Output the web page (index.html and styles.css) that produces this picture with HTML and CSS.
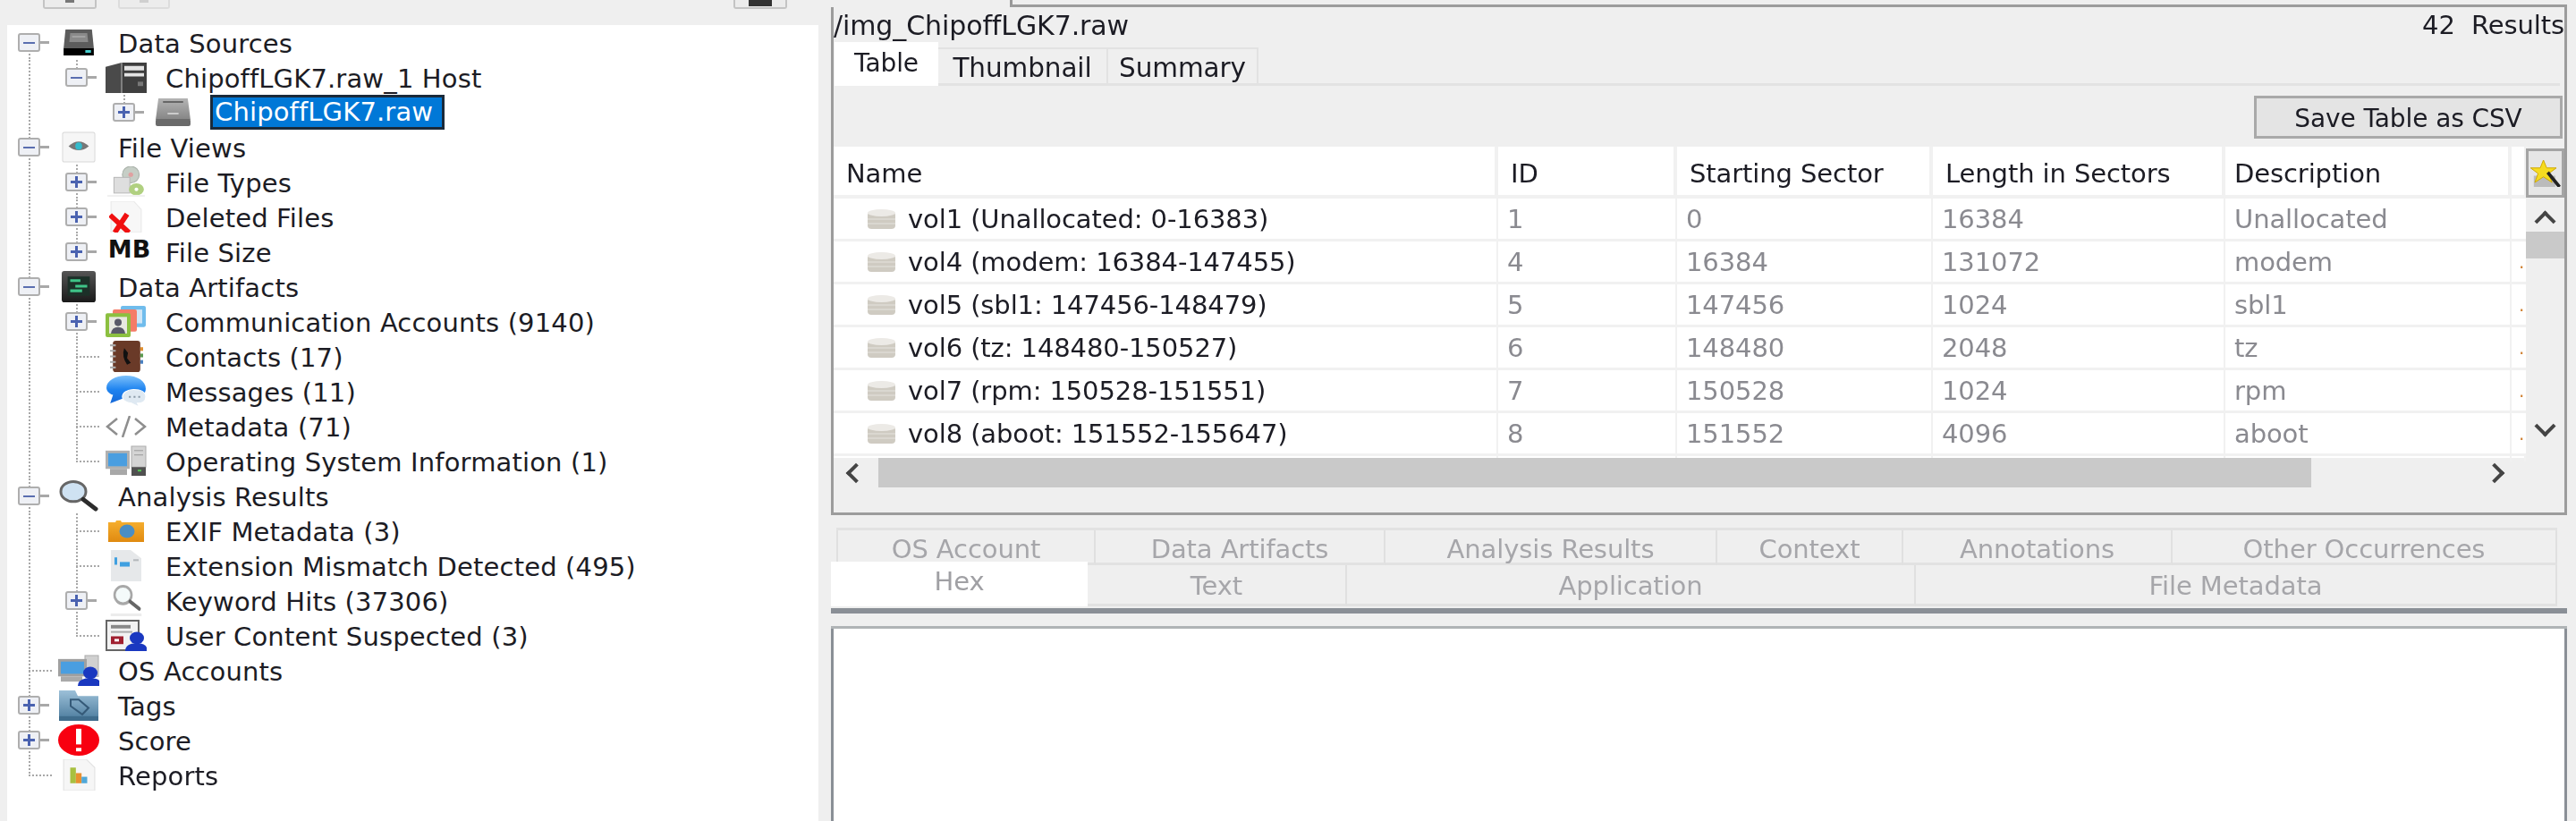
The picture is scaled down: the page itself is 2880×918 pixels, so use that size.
FILE: index.html
```html
<!DOCTYPE html>
<html lang="en">
<head>
<meta charset="utf-8">
<title>Autopsy</title>
<link rel="stylesheet" href="styles.css">
</head>
<body>
<svg class="defs" width="0" height="0" aria-hidden="true">
  <defs>
    <linearGradient id="g-disk" x1="0" y1="0" x2="0" y2="1"><stop offset="0" stop-color="#b4b4b4"/><stop offset="1" stop-color="#858585"/></linearGradient>
    <linearGradient id="g-art" x1="0" y1="0" x2="0" y2="1"><stop offset="0" stop-color="#555"/><stop offset="1" stop-color="#1a1a1a"/></linearGradient>
    <linearGradient id="g-exif" x1="0" y1="0" x2="0" y2="1"><stop offset="0" stop-color="#f6b030"/><stop offset="1" stop-color="#e08a10"/></linearGradient>
    <linearGradient id="g-tag" x1="0" y1="0" x2="0" y2="1"><stop offset="0" stop-color="#9cc0d8"/><stop offset="1" stop-color="#4a7a9c"/></linearGradient>
    <linearGradient id="g-msg" x1="0" y1="0" x2="0" y2="1"><stop offset="0" stop-color="#7cc0fa"/><stop offset=".5" stop-color="#1f84f0"/><stop offset="1" stop-color="#1668d8"/></linearGradient>
    <symbol id="i-drive" viewBox="0 0 36 30" preserveAspectRatio="none"><path d="M4 0h28l2 21H2z" fill="#5c5c5c"/><path d="M9 4h18l1 10H8z" fill="#8a8a8a"/><path d="M11 8h14" stroke="#bbb"/><rect x="2" y="21" width="32" height="8" fill="#000"/><rect x="25" y="23" width="6" height="3" fill="#4cc"/></symbol>
    <symbol id="i-host" viewBox="0 0 46 36" preserveAspectRatio="none"><path d="M0 6 18 1v35H0z" fill="#4a4a4a"/><path d="M18 1h28v35H18z" fill="#3f3f3f"/><path d="M21 5h22v5H21zM21 13h22v4H21z" fill="#e4e4e4"/><rect x="36" y="23" width="6" height="5" fill="#777"/><path d="M18 1v35" stroke="#999" stroke-width="1.400"/></symbol>
    <symbol id="i-disk" viewBox="0 0 40 33" preserveAspectRatio="none"><path d="M4 1h32l3 24H1z" fill="url(#g-disk)"/><path d="M9 5h22" stroke="#666" stroke-width="2"/><path d="M14 18h12" stroke="#ccc" stroke-width="2"/><rect x="1" y="24" width="38" height="8" rx="2" fill="#6a6a6a"/></symbol>
    <symbol id="i-eye" viewBox="0 0 40 34" preserveAspectRatio="none"><rect x="1" y="1" width="38" height="32" rx="2" fill="#f6f6f6" stroke="#d8d8d8"/><path d="M8 16q12-10 24 0-12 9-24 0z" fill="#777"/><circle cx="20" cy="16" r="4" fill="#3bc"/></symbol>
    <symbol id="i-types" viewBox="0 0 44 34" preserveAspectRatio="none"><ellipse cx="27" cy="9" rx="9" ry="9" fill="#c6cec6" stroke="#a8b0a8"/><circle cx="27" cy="9" r="2.500" fill="#e0a0a0"/><rect x="9" y="12" width="17" height="17" fill="#dedede" stroke="#b8b8b8"/><ellipse cx="33" cy="25" rx="8" ry="6.500" fill="#b0d080"/><circle cx="33" cy="25" r="2" fill="#fff"/><rect x="2" y="31" width="40" height="2" fill="#f0f0f0"/></symbol>
    <symbol id="i-deleted" viewBox="0 0 36 34" preserveAspectRatio="none"><path d="M2 0h24l8 9v25H2z" fill="#f7f7f7" stroke="#e8e8e8"/><path d="M1 15l20 19M19 14 6 34" stroke="#f01010" stroke-width="5.500"/></symbol>
    <symbol id="i-artifacts" viewBox="0 0 40 34" preserveAspectRatio="none"><rect width="40" height="34" rx="3" fill="url(#g-art)"/><rect x="7" y="6" width="26" height="21" fill="#1c3028"/><path d="M10 9h12v3H10zM16 15h14v3H16zM10 20h14v3H10z" fill="#3fc488"/></symbol>
    <symbol id="i-comm" viewBox="0 0 46 34" preserveAspectRatio="none"><rect x="17" y="0" width="28" height="23" rx="2" fill="#70bcec"/><rect x="32" y="4" width="9" height="15" fill="#cfe6f6"/><rect x="8" y="4" width="27" height="24" rx="2" fill="#f47c68"/><rect x="0" y="8" width="28" height="26" rx="2" fill="#8cc040"/><rect x="4" y="12" width="20" height="18" fill="#e8e8e0"/><circle cx="14" cy="18" r="4" fill="#5a5a68"/><path d="M6 30q1-7 8-7t8 7z" fill="#5a5a68"/></symbol>
    <symbol id="i-contacts" viewBox="0 0 36 34" preserveAspectRatio="none"><rect x="4" y="0" width="29" height="34" rx="3" fill="#6a3a28"/><path d="M1 5h6M1 11h6M1 17h6M1 23h6M1 29h6" stroke="#aaa" stroke-width="2"/><path d="M16 8q-3 9 3 18l4-2-4-5 1-6z" fill="#111"/><path d="M33 9h3" stroke="#e09030" stroke-width="4"/><path d="M33 16h3" stroke="#5a9a50" stroke-width="4"/><path d="M33 23h3" stroke="#4a80c0" stroke-width="4"/></symbol>
    <symbol id="i-msg" viewBox="0 0 44 34" preserveAspectRatio="none"><path d="M22 0c12 0 21 6 21 14 0 5-4 9-8 11H18l-13 5 3-9C3 19 1 16 1 13 1 6 10 0 22 0z" fill="url(#g-msg)"/><path d="M30 15c8 0 13 3 13 8s-4 7-9 7l2 4-8-4c-6-1-10-3-10-7s5-8 12-8z" fill="#dfe9f2" stroke="#fff"/><path d="M25 23h2M30 23h2M35 23h2" stroke="#8a9aa8" stroke-width="2"/></symbol>
    <symbol id="i-code" viewBox="0 0 46 24" preserveAspectRatio="none"><path d="M13 3 2 12l11 9M33 3l11 9-11 9M27 0 19 24" fill="none" stroke="#8e8e8e" stroke-width="2.500"/></symbol>
    <symbol id="i-osinfo" viewBox="0 0 46 36" preserveAspectRatio="none"><rect x="29" y="1" width="16" height="24" fill="#d4d4d4" stroke="#aaa"/><path d="M32 6h10M32 11h10" stroke="#999"/><rect x="0" y="6" width="27" height="21" fill="#b0b0b0"/><rect x="3" y="9" width="21" height="15" fill="#4a9ee0"/><rect x="5" y="27" width="19" height="7" fill="#a8a8a8"/><rect x="29" y="25" width="16" height="10" fill="#505050"/><rect x="36" y="28" width="4" height="2" fill="#5c5"/></symbol>
    <symbol id="i-search" viewBox="0 0 46 36" preserveAspectRatio="none"><ellipse cx="17" cy="13" rx="14" ry="11.500" fill="#cfe2f2" stroke="#666" stroke-width="3"/><path d="M28 22l14 11" stroke="#2c2c2c" stroke-width="5" stroke-linecap="round"/></symbol>
    <symbol id="i-exif" viewBox="0 0 40 24" preserveAspectRatio="none"><path d="M0 2h8l1-2h5l1 2h25v22H0z" fill="url(#g-exif)"/><ellipse cx="21" cy="12" rx="8.500" ry="7.500" fill="#4a8ec4"/></symbol>
    <symbol id="i-mismatch" viewBox="0 0 38 34" preserveAspectRatio="none"><path d="M2 0h22l12 9v25H2z" fill="#e6e8ea"/><rect x="6" y="8" width="3" height="8" fill="#40a0e0"/><rect x="12" y="13" width="11" height="5" fill="#40a0e0"/><path d="M27 11h6" stroke="#b4b8bc" stroke-width="2"/></symbol>
    <symbol id="i-keyword" viewBox="0 0 44 34" preserveAspectRatio="none"><ellipse cx="18" cy="11" rx="11" ry="9.500" fill="#f4fafa" stroke="#a8a8a8" stroke-width="3"/><path d="M27 18l12 8" stroke="#666" stroke-width="4" stroke-linecap="round"/><rect x="2" y="31" width="40" height="3" fill="#ececec"/></symbol>
    <symbol id="i-user" viewBox="0 0 46 36" preserveAspectRatio="none"><path d="M1 1h36v34H1z" fill="#f2f2f2" stroke="#666" stroke-width="2"/><path d="M6 6h22v4H6z" fill="#888"/><path d="M6 14h24" stroke="#aaa" stroke-width="2"/><rect x="6" y="19" width="14" height="9" fill="#a02030"/><rect x="10" y="22" width="5" height="3" fill="#fff"/><ellipse cx="35" cy="21" rx="8" ry="7" fill="#1a38c0"/><path d="M22 36q0-9 13-9t11 9z" fill="#1a38c0"/></symbol>
    <symbol id="i-osacct" viewBox="0 0 46 36" preserveAspectRatio="none"><rect x="30" y="1" width="15" height="24" fill="#d0d0d0" stroke="#aaa"/><rect x="0" y="5" width="32" height="20" fill="#a0a0a0"/><rect x="3" y="8" width="26" height="14" fill="#4a9ee0"/><rect x="3" y="25" width="24" height="6" fill="#aaa"/><ellipse cx="36" cy="21" rx="8" ry="7" fill="#1a38c0"/><path d="M22 36q0-9 14-9t10 9z" fill="#1a38c0"/></symbol>
    <symbol id="i-tags" viewBox="0 0 46 34" preserveAspectRatio="none"><path d="M1 7V1h18l3 6h23v27H1z" fill="url(#g-tag)"/><rect x="1" y="29" width="44" height="5" fill="#3f6c8c"/><path d="M14 11h9l11 9-7 7-13-9z" fill="none" stroke="#355a78" stroke-width="2"/></symbol>
    <symbol id="i-score" viewBox="0 0 46 36" preserveAspectRatio="none"><ellipse cx="23" cy="18" rx="23" ry="18" fill="#f80010"/><rect x="20" y="5" width="6" height="18" fill="#fff"/><rect x="20" y="27" width="6" height="4" fill="#fff"/></symbol>
    <symbol id="i-reports" viewBox="0 0 36 34" preserveAspectRatio="none"><path d="M2 0h24l9 9v25H2z" fill="#f6f6f6" stroke="#e2e2e2"/><rect x="9" y="9" width="6" height="17" fill="#a8c040"/><rect x="15" y="15" width="6" height="11" fill="#e89030"/><rect x="21" y="19" width="6" height="7" fill="#50a8d8"/></symbol>
    <symbol id="i-vol" viewBox="0 0 30 22" preserveAspectRatio="none"><rect x="0" y="3" width="30" height="19" rx="4" fill="#cfcbc2"/><ellipse cx="15" cy="4" rx="15" ry="4" fill="#eceae6"/><path d="M0 11h30M0 16h30" stroke="#e6e4de"/></symbol>
    <symbol id="i-star" viewBox="0 0 30 24" preserveAspectRatio="none"><path d="M4 14h20v10H4z" fill="#bbb"/><path d="M13 0l3 7h9l-7 5 3 8-8-5-8 5 3-8-7-5h9z" fill="#f6dc20" stroke="#d0a800" stroke-width=".8"/><path d="M17 11l11 13" stroke="#222" stroke-width="3"/></symbol>
  </defs>
</svg>

<div class="app">
  <aside class="side">
    <div class="toolbar">
      <span class="tool tool-a"><i class="tool-glyph"></i></span>
      <span class="tool tool-b"><i class="tool-glyph faint"></i></span>
      <span class="tool tool-c"><i class="tool-glyph dark"></i></span>
    </div>
    <div class="tree">
      <div class="row"><span class="c c-down"><i class="ex minus"></i></span><span class="ico"><svg class="s-drive"><use href="#i-drive"/></svg></span><span class="lbl">Data Sources</span></div>
      <div class="row"><span class="c c-v"></span><span class="c c-up"><i class="ex minus"></i></span><span class="ico"><svg><use href="#i-host"/></svg></span><span class="lbl">ChipoffLGK7.raw_1 Host</span></div>
      <div class="row"><span class="c c-v"></span><span class="c"></span><span class="c c-up"><i class="ex plus"></i></span><span class="ico"><svg class="s-disk"><use href="#i-disk"/></svg></span><span class="lbl sel">ChipoffLGK7.raw</span></div>

      <div class="row"><span class="c c-v"><i class="ex minus"></i></span><span class="ico"><svg class="s-narrow"><use href="#i-eye"/></svg></span><span class="lbl">File Views</span></div>
      <div class="row"><span class="c c-v"></span><span class="c c-v"><i class="ex plus"></i></span><span class="ico"><svg><use href="#i-types"/></svg></span><span class="lbl">File Types</span></div>
      <div class="row"><span class="c c-v"></span><span class="c c-v"><i class="ex plus"></i></span><span class="ico"><svg class="s-narrow"><use href="#i-deleted"/></svg></span><span class="lbl">Deleted Files</span></div>
      <div class="row"><span class="c c-v"></span><span class="c c-up"><i class="ex plus"></i></span><span class="ico"><b class="mb">MB</b></span><span class="lbl">File Size</span></div>

      <div class="row"><span class="c c-v"><i class="ex minus"></i></span><span class="ico"><svg class="s-narrow"><use href="#i-artifacts"/></svg></span><span class="lbl">Data Artifacts</span></div>
      <div class="row"><span class="c c-v"></span><span class="c c-v"><i class="ex plus"></i></span><span class="ico"><svg><use href="#i-comm"/></svg></span><span class="lbl">Communication Accounts (9140)</span></div>
      <div class="row"><span class="c c-v"></span><span class="c c-t"></span><span class="ico"><svg class="s-narrow"><use href="#i-contacts"/></svg></span><span class="lbl">Contacts (17)</span></div>
      <div class="row"><span class="c c-v"></span><span class="c c-t"></span><span class="ico"><svg><use href="#i-msg"/></svg></span><span class="lbl">Messages (11)</span></div>
      <div class="row"><span class="c c-v"></span><span class="c c-t"></span><span class="ico"><svg class="s-short"><use href="#i-code"/></svg></span><span class="lbl">Metadata (71)</span></div>
      <div class="row"><span class="c c-v"></span><span class="c c-l"></span><span class="ico"><svg><use href="#i-osinfo"/></svg></span><span class="lbl">Operating System Information (1)</span></div>

      <div class="row"><span class="c c-v"><i class="ex minus"></i></span><span class="ico"><svg><use href="#i-search"/></svg></span><span class="lbl">Analysis Results</span></div>
      <div class="row"><span class="c c-v"></span><span class="c c-t"></span><span class="ico"><svg class="s-exif"><use href="#i-exif"/></svg></span><span class="lbl">EXIF Metadata (3)</span></div>
      <div class="row"><span class="c c-v"></span><span class="c c-t"></span><span class="ico"><svg class="s-narrow"><use href="#i-mismatch"/></svg></span><span class="lbl">Extension Mismatch Detected (495)</span></div>
      <div class="row"><span class="c c-v"></span><span class="c c-v"><i class="ex plus"></i></span><span class="ico"><svg class="s-narrow"><use href="#i-keyword"/></svg></span><span class="lbl">Keyword Hits (37306)</span></div>
      <div class="row"><span class="c c-v"></span><span class="c c-l"></span><span class="ico"><svg><use href="#i-user"/></svg></span><span class="lbl">User Content Suspected (3)</span></div>

      <div class="row"><span class="c c-t"></span><span class="ico"><svg><use href="#i-osacct"/></svg></span><span class="lbl">OS Accounts</span></div>
      <div class="row"><span class="c c-v"><i class="ex plus"></i></span><span class="ico"><svg><use href="#i-tags"/></svg></span><span class="lbl">Tags</span></div>
      <div class="row"><span class="c c-v"><i class="ex plus"></i></span><span class="ico"><svg><use href="#i-score"/></svg></span><span class="lbl">Score</span></div>
      <div class="row"><span class="c c-l"></span><span class="ico"><svg class="s-narrow"><use href="#i-reports"/></svg></span><span class="lbl">Reports</span></div>
    </div>
  </aside>

  <main class="main">
    <div class="tabstub"></div>
    <section class="results">
      <div class="path"><span class="path-text">/img_ChipoffLGK7.raw</span><span class="count">42&nbsp;&nbsp;Results</span></div>
      <div class="tabs">
        <span class="tab on">Table</span>
        <span class="tab thumb">Thumbnail</span>
        <span class="tab summ">Summary</span>
      </div>
      <div class="actions"><span class="csv">Save Table as CSV</span></div>
      <div class="grid-wrap">
        <div class="grid">
          <div class="gr head">
            <span>Name</span><span>ID</span><span>Starting Sector</span><span>Length in Sectors</span><span>Description</span><span></span>
          </div>
          <div class="gr"><span class="nm"><svg class="vol"><use href="#i-vol"/></svg>vol1 (Unallocated: 0-16383)</span><span>1</span><span>0</span><span>16384</span><span>Unallocated</span><span class="tail"></span></div>
          <div class="gr"><span class="nm"><svg class="vol"><use href="#i-vol"/></svg>vol4 (modem: 16384-147455)</span><span>4</span><span>16384</span><span>131072</span><span>modem</span><span class="tail">.</span></div>
          <div class="gr"><span class="nm"><svg class="vol"><use href="#i-vol"/></svg>vol5 (sbl1: 147456-148479)</span><span>5</span><span>147456</span><span>1024</span><span>sbl1</span><span class="tail">.</span></div>
          <div class="gr"><span class="nm"><svg class="vol"><use href="#i-vol"/></svg>vol6 (tz: 148480-150527)</span><span>6</span><span>148480</span><span>2048</span><span>tz</span><span class="tail">.</span></div>
          <div class="gr"><span class="nm"><svg class="vol"><use href="#i-vol"/></svg>vol7 (rpm: 150528-151551)</span><span>7</span><span>150528</span><span>1024</span><span>rpm</span><span class="tail">.</span></div>
          <div class="gr"><span class="nm"><svg class="vol"><use href="#i-vol"/></svg>vol8 (aboot: 151552-155647)</span><span>8</span><span>151552</span><span>4096</span><span>aboot</span><span class="tail">.</span></div>
          <div class="gr stub"><span></span><span></span><span></span><span></span><span></span><span></span></div>
        </div>
        <div class="vscroll">
          <span class="corner"><svg><use href="#i-star"/></svg></span>
          <span class="arrow up"></span>
          <span class="vthumb"></span>
          <span class="arrow down"></span>
        </div>
      </div>
      <div class="hscroll">
        <span class="harrow left"></span>
        <span class="hthumb"></span>
        <span class="harrow right"></span>
      </div>
    </section>

    <div class="lower-tabs">
      <div class="ltrow upper">
        <span class="lt w1">OS Account</span><span class="lt w2">Data Artifacts</span><span class="lt w3">Analysis Results</span><span class="lt w4">Context</span><span class="lt w5">Annotations</span><span class="lt w6">Other Occurrences</span>
      </div>
      <div class="ltrow lower">
        <span class="lt on x1">Hex</span><span class="lt x2">Text</span><span class="lt x3">Application</span><span class="lt x4">File Metadata</span>
      </div>
    </div>
    <section class="viewer">
      <div class="viewer-band"></div>
      <div class="viewer-body"></div>
    </section>
  </main>
</div>
</body>
</html>
```
FILE: styles.css
```css
* { box-sizing: border-box; }
html, body { margin: 0; padding: 0; height: 100%; overflow: hidden; }
body {
  background: #efefef;
  color: #1c1c24;
  font-family: "DejaVu Sans", sans-serif;
  font-size: 29px;
  letter-spacing: -0.1px;
}
.defs { display: block; height: 0; }
.app { display: flex; height: 918px; filter: blur(0.7px); }

/* left */
.side { width: 929px; flex: none; display: flex; flex-direction: column; padding-left: 8px; }
.toolbar { height: 28px; display: flex; align-items: flex-start; }
.tool { height: 10px; border: 2px solid #c4c4c4; border-top: 0; border-radius: 0 0 3px 3px; background: #ececec; display: flex; justify-content: center; }
.tool-a { width: 60px; margin-left: 40px; }
.tool-b { width: 58px; margin-left: 24px; border-color: #dcdcdc; }
.tool-c { width: 60px; margin-left: 630px; }
.tool-glyph { width: 10px; height: 3px; background: #777; }
.tool-glyph.faint { background: #cfcfcf; }
.tool-glyph.dark { width: 26px; height: 7px; background: #333; }
.tree { width: 907px; height: 890px; background: #fff; }
.row { display: flex; height: 39px; align-items: center; }
.c {
  width: 53px; height: 39px; flex: none; display: flex; align-items: center;
  --dots: repeating-linear-gradient(to bottom, #a8a8a8 0 2px, transparent 2px 4px);
  --dash: repeating-linear-gradient(to right, #a8a8a8 0 2px, transparent 2px 4px);
  background-repeat: no-repeat;
}
.c-v { background-image: var(--dots); background-size: 2px 100%; background-position: 24px 0; }
.c-up { background-image: var(--dots); background-size: 2px 50%; background-position: 24px 0; }
.c-down { background-image: var(--dots); background-size: 2px 50%; background-position: 24px 100%; }
.c-t { background-image: var(--dots), var(--dash); background-size: 2px 100%, 28px 2px; background-position: 24px 0, 24px 19px; }
.c-l { background-image: var(--dots), var(--dash); background-size: 2px 20px, 28px 2px; background-position: 24px 0, 24px 19px; }
.ex {
  display: block; width: 25px; height: 21px; margin-left: 12px;
  border: 2px solid #aeaeae; border-radius: 3px; background-color: #eef0f5;
  background-repeat: no-repeat; box-shadow: 12px 0 0 -9px #a8a8a8, 19px 0 0 -9px #a8a8a8;
}
.minus { background-image: linear-gradient(#5a6eb0, #5a6eb0); background-size: 13px 2px; background-position: center; }
.plus { background-image: linear-gradient(#4a62b0, #4a62b0), linear-gradient(#4a62b0, #4a62b0); background-size: 13px 3px, 3px 13px; background-position: center; }
.ico { width: 53px; height: 39px; flex: none; display: flex; align-items: center; justify-content: center; }
.ico svg { width: 46px; height: 35px; display: block; }
.ico svg.s-narrow { width: 38px; }
.ico svg.s-drive { width: 38px; height: 30px; }
.ico svg.s-disk { width: 41px; height: 33px; }
.ico svg.s-short { height: 24px; }
.ico svg.s-exif { width: 40px; height: 24px; }
.mb { font-size: 27px; font-weight: 700; color: #111; letter-spacing: 0; margin: -6px 0 0 8px; line-height: 1; }
.lbl { margin-left: 18px; white-space: nowrap; line-height: 34px; margin-top: 2px; letter-spacing: 0.15px; }
.sel { background: #0078d7; color: #fff; border: 3px solid #1a2a3a; padding: 0 4px 0 2px; margin: 0 0 0 15px; height: 39px; width: 262px; line-height: 33px; }

/* right */
.main { width: 1941px; flex: none; display: flex; flex-direction: column; }
.tabstub { height: 8px; margin-left: 200px; border-left: 3px solid #999; border-bottom: 3px solid #9c9c9c; }
.results { height: 568px; border: 3px solid #9c9c9c; border-top: 0; display: flex; flex-direction: column; }
.path { height: 40px; display: flex; justify-content: space-between; align-items: center; }
.path-text { font-size: 30px; }
.count { white-space: nowrap; }
.tabs { display: flex; height: 48px; margin-left: 1px; margin-right: 5px; border-bottom: 3px solid #e2e2e2; align-items: flex-end; font-size: 29.500px; }
.tab { display: flex; align-items: center; justify-content: center; height: 41px; margin-bottom: -1px; border: 2px solid #e2e2e2; border-bottom: 0; border-left: 0; padding-top: 3px; }
.tab.on { width: 116px; height: 49px; margin-bottom: -3px; background: #fff; border: 0; padding: 0 0 3px; font-size: 28px; }
.thumb { width: 190px; }
.summ { width: 168px; }
.actions { height: 68px; display: flex; justify-content: flex-end; padding: 11px 2px 9px 0; }
.csv { width: 345px; display: flex; align-items: center; justify-content: center; background: #e4e4e4; border: 3px solid #a9a9a9; font-size: 28px; padding-top: 2px; }
.grid-wrap { display: flex; height: 348px; }
.grid { width: 1892px; background: #fff; display: flex; flex-direction: column; }
.gr { display: grid; grid-template-columns: 743px 200px 286px 327px 320px 16px; height: 48px; border-bottom: 3px solid #f1f1f1; color: #8a8a90; flex: none; }
.gr > span { display: flex; align-items: center; padding-left: 10px; border-right: 2px solid #f1f1f1; white-space: nowrap; }
.gr.head { height: 58px; color: #1c1c24; border-bottom-width: 4px; }
.gr.head > span { border-right-width: 4px; padding-left: 14px; padding-top: 6px; }
.gr.head > span:nth-child(5) { padding-left: 10px; }
.gr .nm { color: #1c1c24; padding-left: 38px; }
.vol { width: 31px; height: 22px; margin-right: 14px; flex: none; }
.gr .tail { color: #d08030; border-right: 0; padding-left: 8px; font-size: 20px; overflow: hidden; }
.gr.stub { height: 6px; border-bottom: 0; }
.vscroll { width: 44px; padding-top: 2px; display: flex; flex-direction: column; align-items: stretch; }
.corner { height: 55px; border: 3px solid #a4a4a4; background: #e6e6e6; display: flex; align-items: center; justify-content: center; }
.corner svg { width: 36px; height: 30px; }
.arrow { height: 38px; display: block; }
.up::before, .down::before { content: ""; display: block; width: 13px; height: 13px; margin: 18px auto 0; border-left: 4px solid #444; border-top: 4px solid #444; transform: rotate(45deg); }
.down::before { margin: 12px auto 0; transform: rotate(225deg); }
.vthumb { height: 30px; background: #c9c9c9; }
.down { margin-top: auto; margin-bottom: 18px; }
.hscroll { flex: 1; display: flex; align-items: flex-start; }
.harrow { width: 50px; height: 33px; display: flex; align-items: center; justify-content: center; }
.harrow::before { content: ""; display: block; width: 12px; height: 12px; border-left: 4px solid #444; border-top: 4px solid #444; transform: rotate(-45deg); }
.harrow.right::before { transform: rotate(135deg); }
.hthumb { width: 1602px; height: 33px; background: #c9c9c9; }
.harrow.right { margin-left: auto; margin-right: 50px; width: 56px; }

.lower-tabs { padding-top: 14px; color: #a6a6aa; height: 104px; }
.ltrow { display: flex; margin-left: 6px; width: 1924px; }
.upper { height: 42px; border-top: 3px solid #e2e2e2; }
.lower { height: 46px; margin-left: 0; width: 1930px; }
.lt { display: flex; align-items: center; justify-content: center; border-right: 2px solid #e0e0e0; border-bottom: 3px solid #e2e2e2; white-space: nowrap; }
.upper .lt { padding-top: 5px; }
.lower .lt { padding-top: 2px; }
.w1 { width: 290px; border-left: 2px solid #e0e0e0; }
.w2 { width: 324px; }
.w3 { width: 371px; }
.w4 { width: 208px; }
.w5 { width: 301px; }
.w6 { width: 430px; }
.x1 { width: 287px; }
.x2 { width: 290px; }
.x3 { width: 636px; }
.x4 { width: 717px; }
.lower .lt.on { background: #fff; color: #a0a0a4; border: 0; margin-top: -4px; height: 50px; padding: 0 0 6px; }
.viewer { flex: 1; display: flex; flex-direction: column; border-top: 6px solid #8a8f96; }
.viewer-band { height: 17px; border-bottom: 3px solid #b0b4b6; }
.viewer-body { flex: 1; background: #fff; border-left: 3px solid #8a8f96; border-right: 3px solid #8a8f96; }
```
